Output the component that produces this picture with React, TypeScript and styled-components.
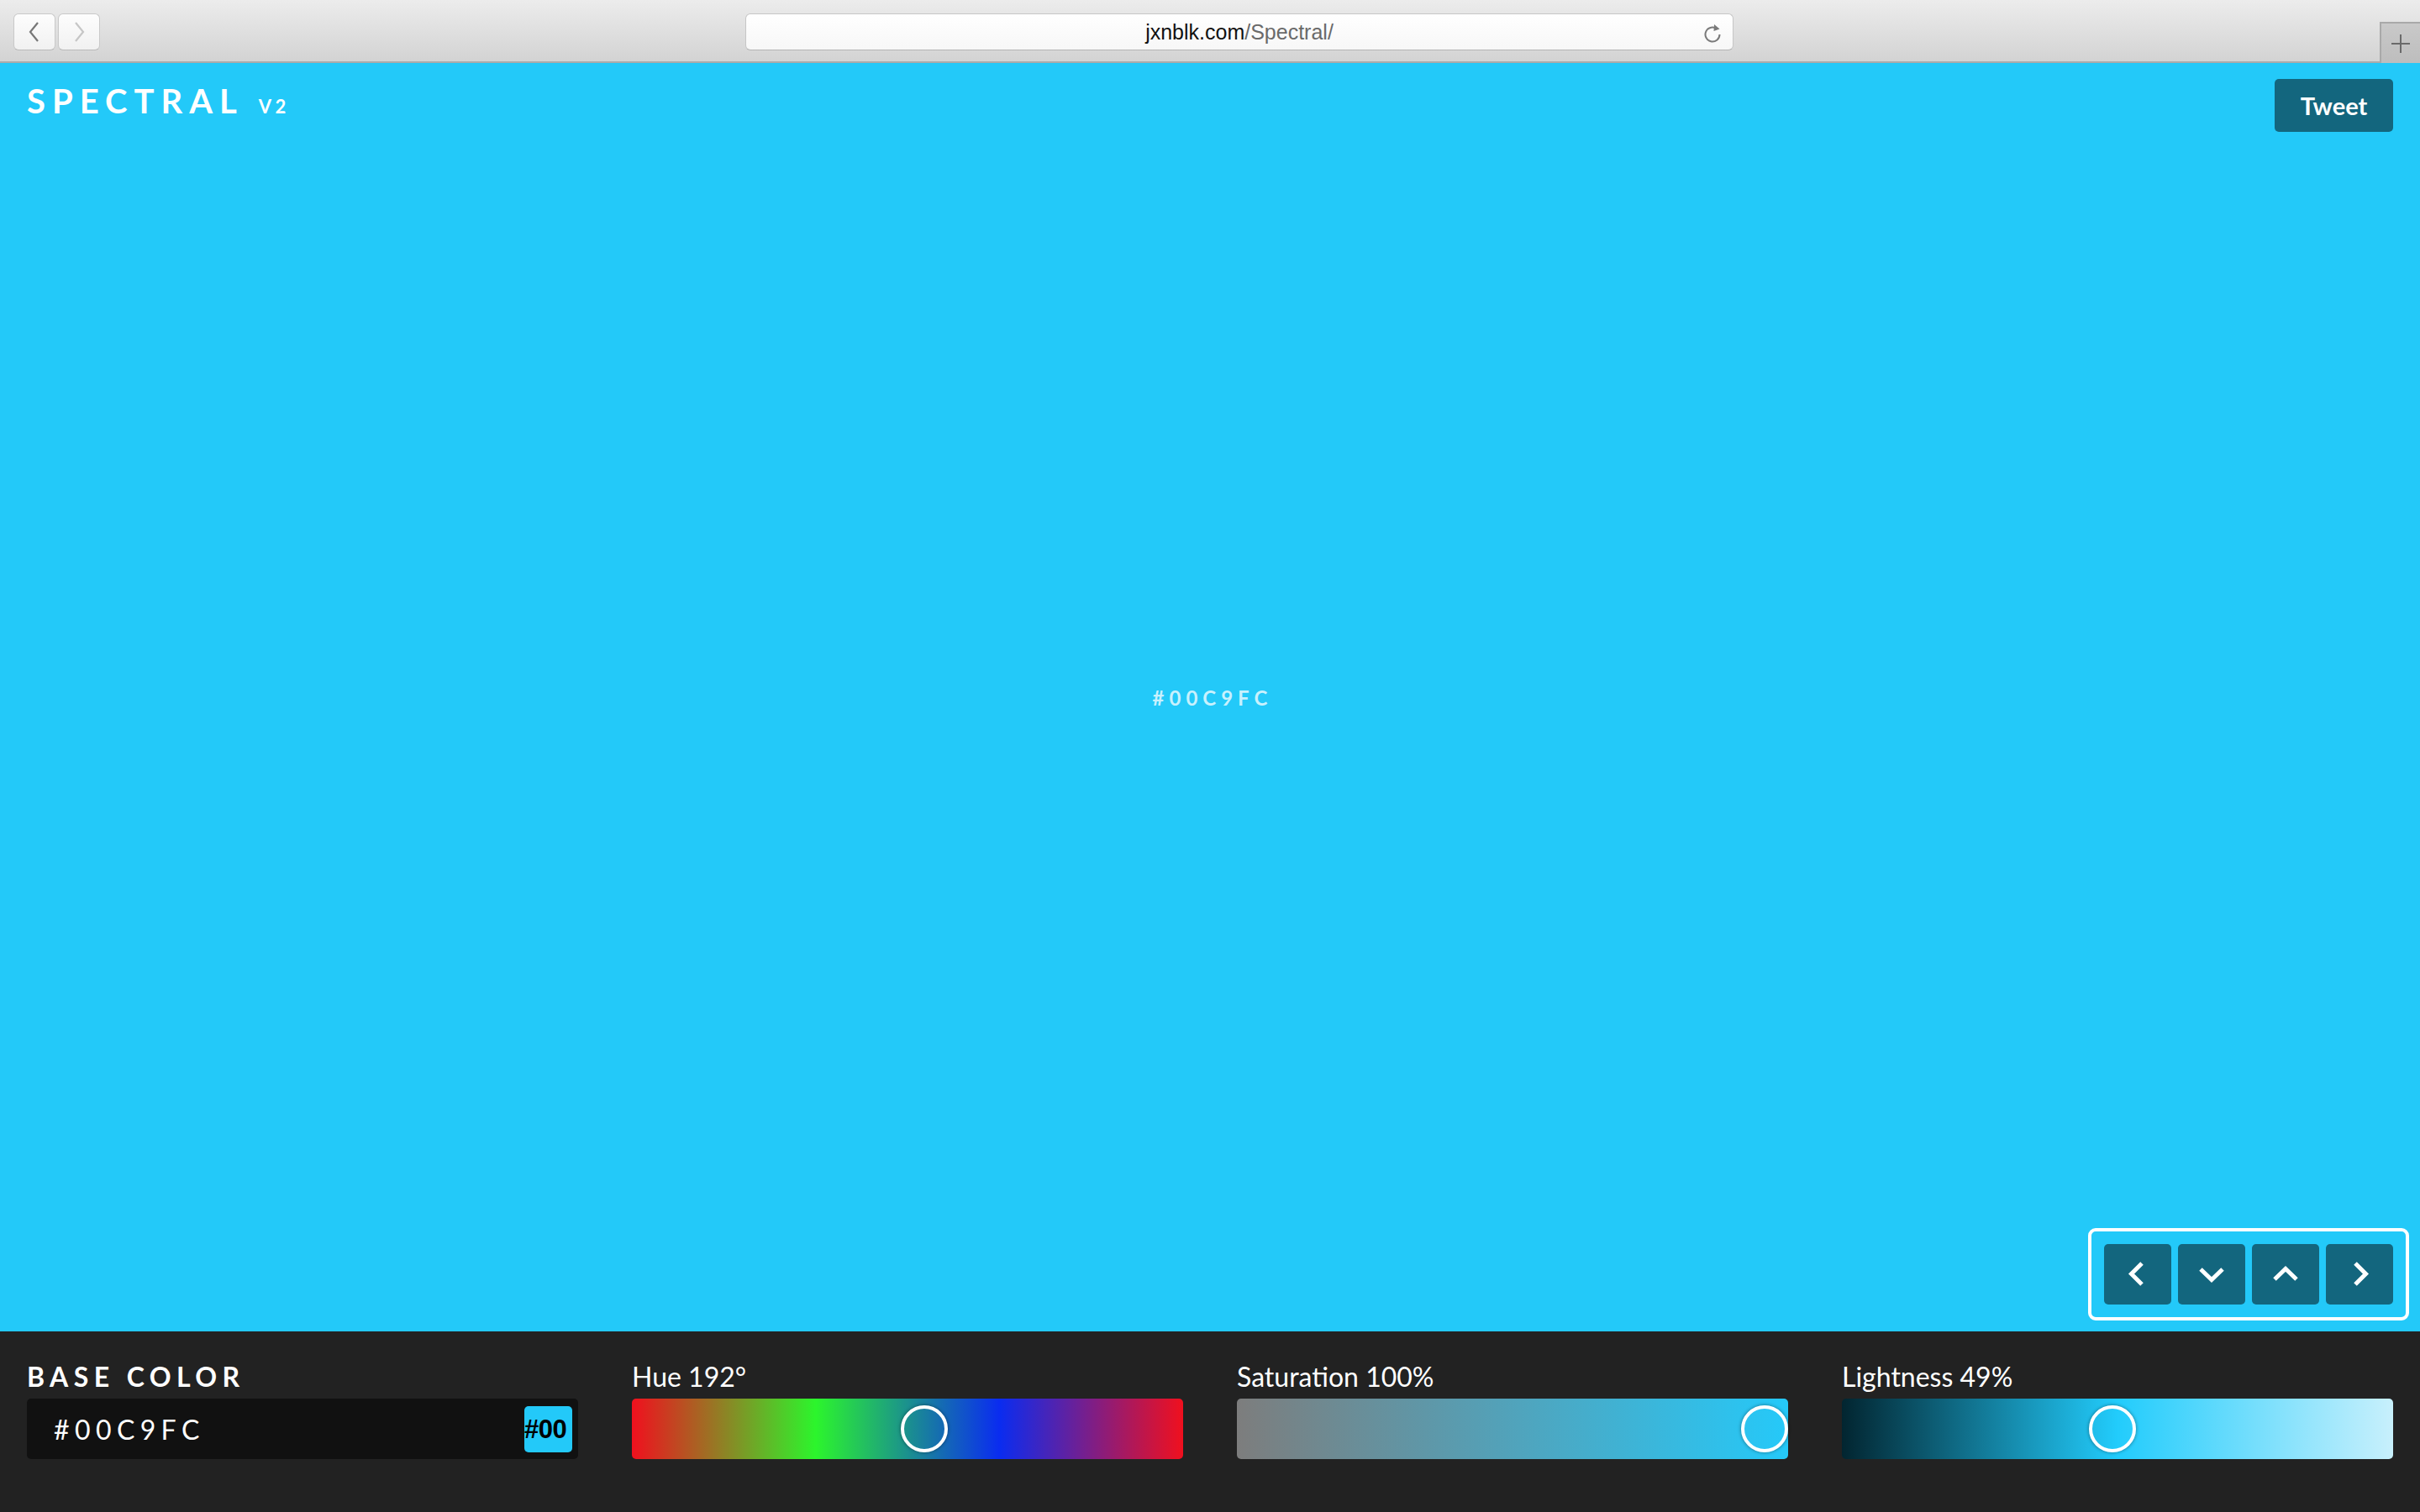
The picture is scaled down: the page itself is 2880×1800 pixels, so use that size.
import React from "react";
import styled, { createGlobalStyle } from "styled-components";

const GlobalStyle = createGlobalStyle`
  html, body { margin: 0; padding: 0; height: 100%; }
  body { font-family: Lato, "Open Sans", sans-serif; background: #222; }
  #root { height: 100%; }
  * { box-sizing: border-box; }
`;

const BG = "#23c9f9";
const DARK = "#13667e";

const Page = styled.div`
  height: 1800px;
  display: grid;
  grid-template-rows: 75px 1fr 215px;
`;

/* ---------- browser chrome ---------- */
const Chrome = styled.div`
  display: flex;
  align-items: flex-start;
  padding-top: 16px;
  padding-left: 16px;
  background: linear-gradient(#ececec, #d3d3d3);
  border-bottom: 2px solid #ababab;
  position: relative;
`;

const NavGroup = styled.div`
  display: flex;
  gap: 3px;
`;

const ChromeButton = styled.div`
  width: 50px;
  height: 44px;
  border-radius: 6px;
  background: linear-gradient(#fdfdfd, #f1f1f1);
  border: 1px solid #c9c9c9;
  border-bottom-color: #b9b9b9;
  display: flex;
  align-items: center;
  justify-content: center;
`;

const UrlBar = styled.div`
  margin-left: 768px;
  width: 1176px;
  height: 44px;
  border-radius: 6px;
  background: linear-gradient(#ffffff, #f7f7f7);
  border: 1px solid #c6c6c6;
  border-bottom-color: #b4b4b4;
  display: flex;
  align-items: center;
  justify-content: center;
  position: relative;
  font-family: "Liberation Sans", Arial, sans-serif;
  font-size: 25px;
  color: #111;
`;

const UrlPath = styled.span`
  color: #6a6a6a;
`;

const Reload = styled.div`
  position: absolute;
  right: 12px;
  top: 10px;
  width: 24px;
  height: 24px;
`;

const NewTab = styled.div`
  position: absolute;
  right: 0;
  bottom: -2px;
  width: 48px;
  height: 49px;
  background: linear-gradient(#c9c9c9, #bdbdbd);
  border-left: 2px solid #a9a9a9;
  border-top: 2px solid #a9a9a9;
  display: flex;
  align-items: center;
  justify-content: center;
`;

/* ---------- main color area ---------- */
const Stage = styled.main`
  background: ${BG};
  display: grid;
  grid-template-rows: 123px 1fr 123px;
  color: #fff;
`;

const Header = styled.header`
  display: flex;
  justify-content: space-between;
  align-items: flex-start;
  padding: 19px 32px 0;
`;

const Logo = styled.h1`
  margin: 6px 0 0;
  font-family: Lato, sans-serif;
  font-weight: 700;
  font-size: 40px;
  line-height: 40px;
  letter-spacing: 0.2em;
  display: flex;
  align-items: baseline;
`;

const Version = styled.span`
  font-size: 22px;
  letter-spacing: 0.2em;
  margin-left: 18px;
`;

const TweetButton = styled.a`
  width: 141px;
  height: 63px;
  border-radius: 5px;
  background: ${DARK};
  color: #fff;
  font-family: Lato, sans-serif;
  font-weight: 700;
  font-size: 29px;
  display: flex;
  align-items: center;
  justify-content: center;
  text-decoration: none;
`;

const Center = styled.div`
  display: flex;
  align-items: center;
  justify-content: center;
`;

const HexLabel = styled.div`
  font-family: Lato, sans-serif;
  font-weight: 700;
  font-size: 24px;
  letter-spacing: 0.25em;
  color: rgba(255, 255, 255, 0.75);
  margin-left: 6px;
`;

const Footer = styled.div`
  display: flex;
  justify-content: flex-end;
  align-items: flex-end;
  padding: 0 13px 13px;
`;

const NavBox = styled.div`
  display: flex;
  gap: 8px;
  padding: 15px 15px;
  border: 4px solid #fff;
  border-radius: 9px;
`;

const ArrowButton = styled.button`
  width: 80px;
  height: 72px;
  border: 0;
  border-radius: 5px;
  background: ${DARK};
  display: flex;
  align-items: center;
  justify-content: center;
  padding: 0;
  cursor: pointer;
`;

/* ---------- bottom panel ---------- */
const Panel = styled.section`
  background: #222;
  display: grid;
  grid-template-columns: repeat(4, 1fr);
  gap: 64px;
  padding: 38px 32px 63px;
`;

const Field = styled.div`
  display: flex;
  flex-direction: column;
  gap: 10px;
`;

const FieldLabel = styled.div<{ $caps?: boolean }>`
  font-family: Lato, sans-serif;
  color: #fff;
  font-size: 32px;
  line-height: 32px;
  font-weight: ${(p) => (p.$caps ? 700 : 400)};
  letter-spacing: ${(p) => (p.$caps ? "0.2em" : "0")};
`;

const HexInput = styled.div`
  height: 72px;
  border-radius: 5px;
  background: #111;
  display: flex;
  align-items: center;
  justify-content: space-between;
  padding: 0 7px 0 32px;
`;

const HexValue = styled.span`
  font-family: Lato, sans-serif;
  font-size: 32px;
  color: #fff;
  letter-spacing: 0.2em;
`;

const Swatch = styled.div`
  width: 57px;
  height: 55px;
  border-radius: 5px;
  background: ${BG};
  white-space: nowrap;
  font-family: "Liberation Sans", Arial, sans-serif;
  font-weight: 700;
  font-size: 31px;
  line-height: 55px;
  color: #000;
  letter-spacing: -0.5px;
`;

const Track = styled.div<{ $bg: string }>`
  position: relative;
  height: 72px;
  border-radius: 5px;
  background: ${(p) => p.$bg};
`;

const Thumb = styled.div`
  position: absolute;
  top: 8px;
  width: 56px;
  height: 56px;
  border-radius: 50%;
  border: 4px solid #fff;
  box-shadow: 0 0 4px rgba(0, 0, 0, 0.45);
`;

const Chevron = ({ dir }: { dir: "left" | "right" | "up" | "down" }) => {
  const pts = {
    left: "21,3 8.5,15.5 21,28",
    right: "11,3 23.5,15.5 11,28",
    up: "3,22 16,9.5 29,22",
    down: "3,10 16,22.5 29,10",
  }[dir];
  return (
    <svg width="32" height="32" viewBox="0 0 32 32">
      <polyline points={pts} fill="none" stroke="#fff" strokeWidth="5" strokeLinejoin="miter" />
    </svg>
  );
};

const hueGradient = "linear-gradient(to right, #f0101e, #2cf52c, #0a2cf0, #f0101e)";
const satGradient = "linear-gradient(to right, #7d7d7d, #25c9f9)";
const lightGradient = "linear-gradient(to right, #022530, #22ccfc 50%, #c8f0fc)";

const sliders = [
  { label: "Hue 192°", bg: hueGradient, v: 192 / 360 },
  { label: "Saturation 100%", bg: satGradient, v: 1 },
  { label: "Lightness 49%", bg: lightGradient, v: 0.49 },
];

export default function App() {
  return (
    <>
      <GlobalStyle />
      <Page>
        <Chrome>
          <NavGroup>
            <ChromeButton>
              <svg width="20" height="26" viewBox="0 0 20 26">
                <polyline points="14,2 5,13 14,24" fill="none" stroke="#777" strokeWidth="2.2" />
              </svg>
            </ChromeButton>
            <ChromeButton>
              <svg width="20" height="26" viewBox="0 0 20 26">
                <polyline points="6,2 15,13 6,24" fill="none" stroke="#c6c6c6" strokeWidth="2.2" />
              </svg>
            </ChromeButton>
          </NavGroup>
          <UrlBar>
            jxnblk.com<UrlPath>/Spectral/</UrlPath>
            <Reload>
              <svg width="24" height="24" viewBox="0 0 24 24">
                <path d="M17.5 7.5 A8.5 8.5 0 1 0 20.5 14" fill="none" stroke="#7a7a7a" strokeWidth="2" />
                <polygon points="14,2 20.5,7.5 13.5,10" fill="#7a7a7a" />
              </svg>
            </Reload>
          </UrlBar>
          <NewTab>
            <svg width="24" height="24" viewBox="0 0 24 24">
              <path d="M12 1 V23 M1 12 H23" stroke="#6a6a6a" strokeWidth="2" />
            </svg>
          </NewTab>
        </Chrome>

        <Stage>
          <Header>
            <Logo>
              SPECTRAL<Version>V2</Version>
            </Logo>
            <TweetButton href="#">Tweet</TweetButton>
          </Header>
          <Center>
            <HexLabel>#00C9FC</HexLabel>
          </Center>
          <Footer>
            <NavBox>
              <ArrowButton aria-label="Previous">
                <Chevron dir="left" />
              </ArrowButton>
              <ArrowButton aria-label="Down">
                <Chevron dir="down" />
              </ArrowButton>
              <ArrowButton aria-label="Up">
                <Chevron dir="up" />
              </ArrowButton>
              <ArrowButton aria-label="Next">
                <Chevron dir="right" />
              </ArrowButton>
            </NavBox>
          </Footer>
        </Stage>

        <Panel>
          <Field>
            <FieldLabel $caps>BASE COLOR</FieldLabel>
            <HexInput>
              <HexValue>#00C9FC</HexValue>
              <Swatch>#00</Swatch>
            </HexInput>
          </Field>
          {sliders.map((s) => (
            <Field key={s.label}>
              <FieldLabel>{s.label}</FieldLabel>
              <Track $bg={s.bg}>
                <Thumb style={{ left: `calc(${s.v} * (100% - 56px))` }} />
              </Track>
            </Field>
          ))}
        </Panel>
      </Page>
    </>
  );
}
